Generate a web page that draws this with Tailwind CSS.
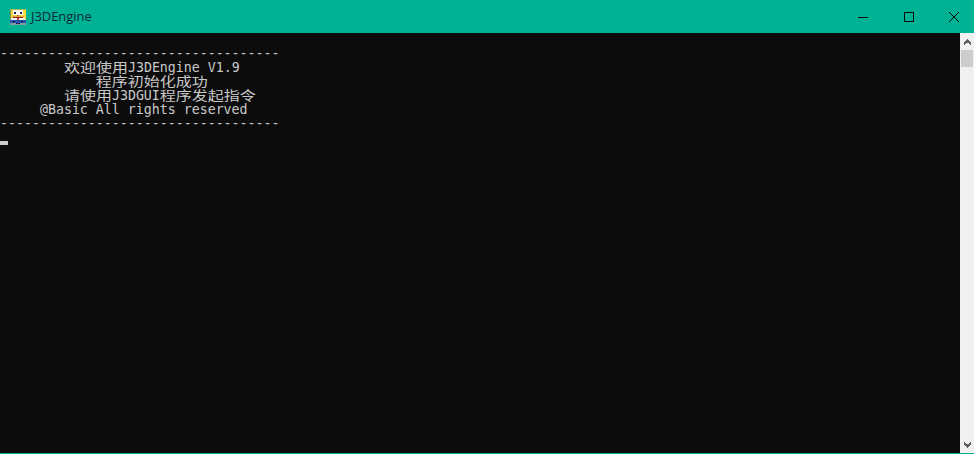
<!DOCTYPE html>
<html>
  <head>
    <meta charset="UTF-8" />
    <script src="https://cdn.jsdelivr.net/npm/@tailwindcss/browser@4"></script>
  </head>
  <body class="w-[974px] h-[454px] overflow-hidden">
    <div class="flex flex-col h-[454px] border-b border-[#00b294] bg-[#0c0c0c]">
      <!-- title bar -->
      <div class="flex flex-row items-center h-[33px] shrink-0 bg-[#00b294]">
        <svg class="ml-[10px] w-4 h-4 shrink-0" viewBox="0 0 16 16" shape-rendering="crispEdges">
          <rect width="16" height="16" fill="#f0dc40" />
          <rect x="0" y="0" width="16" height="1" fill="#a8b850" />
          <rect x="0" y="1" width="1" height="10" fill="#8a8a50" />
          <rect x="3" y="1" width="5" height="5" fill="#ffffff" />
          <rect x="8" y="1" width="5" height="5" fill="#ffffff" />
          <rect x="4" y="3" width="2" height="2" fill="#20204a" />
          <rect x="10" y="3" width="2" height="2" fill="#20204a" />
          <rect x="7" y="6" width="2" height="1" fill="#c8702c" />
          <rect x="2" y="7" width="12" height="1" fill="#e8a040" />
          <rect x="3" y="8" width="10" height="1" fill="#7a3020" />
          <rect x="1" y="9" width="14" height="2" fill="#f6f6f0" />
          <rect x="7" y="9" width="2" height="2" fill="#d83a30" />
          <rect x="0" y="11" width="16" height="3" fill="#2456b0" />
          <rect x="3" y="12" width="2" height="1" fill="#101030" />
          <rect x="11" y="12" width="2" height="1" fill="#101030" />
          <rect x="0" y="14" width="16" height="2" fill="#8a9aa0" />
          <rect x="6" y="14" width="4" height="1" fill="#20204a" />
        </svg>
        <div class="ml-[5px] text-[12.9px] leading-none text-[#06283a] font-['Open_Sans',sans-serif]">J3DEngine</div>
        <div class="flex flex-row ml-auto -mr-[3px] h-full">
          <div class="w-[45.5px] flex items-center justify-center">
            <svg class="w-[10px] h-[10px]" viewBox="0 0 10 10" shape-rendering="crispEdges"><rect x="0" y="5" width="10" height="1" fill="#0a0a0a" /></svg>
          </div>
          <div class="w-[45.5px] flex items-center justify-center">
            <svg class="w-[10px] h-[10px]" viewBox="0 0 10 10" shape-rendering="crispEdges"><rect x="0.5" y="0.5" width="9" height="9" fill="none" stroke="#0a0a0a" /></svg>
          </div>
          <div class="w-[45.5px] flex items-center justify-center">
            <svg class="w-[10px] h-[10px]" viewBox="0 0 10 10"><path d="M0 0 10 10M10 0 0 10" stroke="#0a0a0a" stroke-width="1" /></svg>
          </div>
        </div>
      </div>

      <div class="flex flex-row flex-1 min-h-0">
        <!-- console output -->
        <div class="flex-1 pt-[14px] text-[13.28px] leading-[14px] text-[#c8c8c8] font-['DejaVu_Sans_Mono','Noto_Sans_CJK_SC',monospace]">
          <div class="h-[14px] whitespace-pre">-----------------------------------</div>
          <div class="h-[14px] whitespace-pre">        <span class="inline-block h-[14px] align-top text-[16px] leading-[14px] scale-y-[0.8]">欢迎使用</span>J3DEngine V1.9</div>
          <div class="h-[14px] whitespace-pre">            <span class="inline-block h-[14px] align-top text-[16px] leading-[14px] scale-y-[0.8]">程序初始化成功</span></div>
          <div class="h-[14px] whitespace-pre">        <span class="inline-block h-[14px] align-top text-[16px] leading-[14px] scale-y-[0.8]">请使用</span>J3DGUI<span class="inline-block h-[14px] align-top text-[16px] leading-[14px] scale-y-[0.8]">程序发起指令</span></div>
          <div class="h-[14px] whitespace-pre">     @Basic All rights reserved</div>
          <div class="h-[14px] whitespace-pre">-----------------------------------</div>
          <div class="mt-[10px] w-2 h-1 bg-[#cccccc]"></div>
        </div>

        <!-- scrollbar -->
        <div class="flex flex-col w-[14px] shrink-0 bg-[#f0f0f0]">
          <div class="flex items-center justify-center h-[17px]">
            <svg class="w-[7px] h-[6px]" viewBox="0 0 7 6" shape-rendering="crispEdges"><path d="M3 0h1v1h1v1h1v1h1v3h-1v-1h-1v-1h-3v1h-1v1h-1v-3h1v-1h1v-1h1z" fill="#606060" /></svg>
          </div>
          <div class="mx-px h-[17px] bg-[#cdcdcd]"></div>
          <div class="flex items-center justify-center h-[17px] mt-auto">
            <svg class="w-[7px] h-[6px]" viewBox="0 0 7 6" shape-rendering="crispEdges"><path d="M3 6h1v-1h1v-1h1v-1h1v-3h-1v1h-1v1h-3v-1h-1v-1h-1v3h1v1h1v1h1z" fill="#606060" /></svg>
          </div>
        </div>
      </div>
    </div>
  </body>
</html>
